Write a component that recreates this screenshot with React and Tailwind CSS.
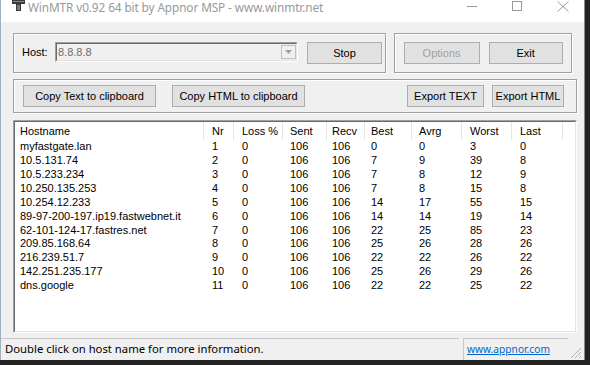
import React from "react";

const rows = [
  ["myfastgate.lan", 1, 0, 106, 106, 0, 0, 3, 0],
  ["10.5.131.74", 2, 0, 106, 106, 7, 9, 39, 8],
  ["10.5.233.234", 3, 0, 106, 106, 7, 8, 12, 9],
  ["10.250.135.253", 4, 0, 106, 106, 7, 8, 15, 8],
  ["10.254.12.233", 5, 0, 106, 106, 14, 17, 55, 15],
  ["89-97-200-197.ip19.fastwebnet.it", 6, 0, 106, 106, 14, 14, 19, 14],
  ["62-101-124-17.fastres.net", 7, 0, 106, 106, 22, 25, 85, 23],
  ["209.85.168.64", 8, 0, 106, 106, 25, 26, 28, 26],
  ["216.239.51.7", 9, 0, 106, 106, 22, 22, 26, 22],
  ["142.251.235.177", 10, 0, 106, 106, 25, 26, 29, 26],
  ["dns.google", 11, 0, 106, 106, 22, 22, 25, 22],
];

const cols = [
  { label: "Hostname", cls: "w-[189px] pl-[5px]" },
  { label: "Nr", cls: "w-[30px] pl-[8px]" },
  { label: "Loss %", cls: "w-[49px] pl-[8px]" },
  { label: "Sent", cls: "w-[44px] pl-[7px]" },
  { label: "Recv", cls: "w-[38px] pl-[5px]" },
  { label: "Best", cls: "w-[47px] pl-[6px]" },
  { label: "Avrg", cls: "w-[50px] pl-[7px]" },
  { label: "Worst", cls: "w-[50px] pl-[8px]" },
  { label: "Last", cls: "w-[51px] pl-[8px]" },
];

function Btn({ children, cls, disabled }) {
  return (
    <div
      className={
        "h-[22px] flex items-center justify-center bg-[#e1e1e1] border border-[#adadad] " +
        (disabled ? "text-[#a0a0a0] " : "text-black ") +
        cls
      }
    >
      {children}
    </div>
  );
}

function AppIcon() {
  return (
    <svg width="16" height="11" viewBox="0 0 16 11">
      <rect x="2" y="0" width="13" height="4" fill="#3a3a3a" />
      <rect x="3" y="1" width="11" height="1" fill="#8a8a8a" />
      <rect x="6" y="4" width="5" height="7" fill="#3a3a3a" />
      <rect x="7" y="5" width="3" height="5" fill="#7a7a7a" />
    </svg>
  );
}

export default function App() {
  return (
    <div
      className="w-[590px] h-[365px] bg-[#232323] overflow-hidden flex text-[11px]"
      style={{ fontFamily: '"Liberation Sans", Arial, sans-serif' }}
    >
      <div className="w-[1px] h-[360px] bg-[#9fb0c0]" />
      <div className="w-[584px] h-[360px] bg-[#f0f0f0] flex flex-col border-r border-[#8a8a8a]">
        {/* Title bar */}
        <div
          className="h-[22px] bg-white flex items-start text-[#999999] shrink-0"
          style={{ fontFamily: '"Noto Sans", "Open Sans", sans-serif' }}
        >
          <div className="pl-[9px] w-[27px]">
            <AppIcon />
          </div>
          <div className="text-[11.8px] leading-[15px] tracking-[-0.1px] whitespace-nowrap">
            WinMTR v0.92 64 bit by Appnor MSP - www.winmtr.net
          </div>
          <div className="flex-1" />
          <div className="w-[10px] h-[1px] bg-[#999] mt-[6px] mr-[35px]" />
          <div className="w-[10px] h-[10px] border border-[#999] mt-[1px] mr-[35px]" />
          <svg width="12" height="11" viewBox="0 0 12 11" className="mt-[1px] mr-[15px]">
            <path d="M0.5 0.5 L11.5 10.5 M11.5 0.5 L0.5 10.5" stroke="#999" strokeWidth="1" />
          </svg>
        </div>

        {/* Body */}
        <div className="flex flex-col px-[12px] pt-[11px] flex-1">
          {/* Row 1 */}
          <div className="flex gap-[8px] h-[40px]">
            <div className="w-[376px] h-[40px] border border-[#a0a0a0] shadow-[inset_1px_1px_0_#fff,1px_1px_0_#fff] flex items-start pt-[8px] pl-[8px]">
              <div className="w-[33px] h-[20px] flex items-center leading-none">Host:</div>
              <div className="w-[243px] h-[20px] border border-t-[#a0a0a0] border-l-[#a0a0a0] border-b-white border-r-white">
                <div className="h-full border border-t-[#696969] border-l-[#696969] border-b-[#e3e3e3] border-r-[#e3e3e3] bg-[#f0f0f0] flex items-center">
                  <div className="flex-1 pl-[1px] text-[#6d6d6d] leading-none">8.8.8.8</div>
                  <div className="w-[15px] h-[14px] bg-[#f0f0f0] border border-[#c0c0c0] flex items-center justify-center">
                    <svg width="7" height="4" viewBox="0 0 7 4">
                      <path d="M0 0 L7 0 L3.5 4 Z" fill="#a0a0a0" />
                    </svg>
                  </div>
                </div>
              </div>
              <div className="w-[9px]" />
              <Btn cls="w-[75px]">Stop</Btn>
            </div>
            <div className="w-[180px] h-[40px] border border-[#a0a0a0] shadow-[inset_1px_1px_0_#fff,1px_1px_0_#fff] flex items-start pt-[8px] pl-[9px] gap-[9px]">
              <Btn cls="w-[76px]" disabled>Options</Btn>
              <Btn cls="w-[74px]">Exit</Btn>
            </div>
          </div>

          {/* Row 2 */}
          <div className="mt-[6px] w-[564px] h-[34px] border border-[#a0a0a0] shadow-[inset_1px_1px_0_#fff,1px_1px_0_#fff] flex items-start pt-[5px] pl-[9px]">
            <Btn cls="w-[133px]">Copy Text to clipboard</Btn>
            <div className="w-[16px]" />
            <Btn cls="w-[133px]">Copy HTML to clipboard</Btn>
            <div className="flex-1" />
            <Btn cls="w-[77px]">Export TEXT</Btn>
            <div className="w-[8px]" />
            <Btn cls="w-[72px]">Export HTML</Btn>
            <div className="w-[12px]" />
          </div>

          {/* Table */}
          <div className="mt-[7px] w-[564px] h-[213px] border border-t-[#a0a0a0] border-l-[#a0a0a0] border-b-white border-r-white">
            <div className="w-full h-full border border-t-[#696969] border-l-[#696969] border-b-[#e3e3e3] border-r-[#e3e3e3] bg-white flex flex-col">
              <div className="h-[18px] flex shrink-0">
                {cols.map((c) => (
                  <div
                    key={c.label}
                    className={"h-[18px] flex items-center border-r border-[#e5e5e5] text-black " + c.cls}
                  >
                    {c.label}
                  </div>
                ))}
                <div className="flex-1" />
              </div>
              {rows.map((r, i) => (
                <div key={i} className="h-[13.87px] flex items-center text-black leading-none">
                  {r.map((v, j) => (
                    <div key={j} className={"whitespace-nowrap " + cols[j].cls}>
                      {v}
                    </div>
                  ))}
                </div>
              ))}
            </div>
          </div>
        </div>

        {/* Status bar */}
        <div
          className="h-[22px] flex items-stretch shrink-0 mt-[5px]"
          style={{ fontFamily: '"Noto Sans", "Open Sans", sans-serif' }}
        >
          <div className="w-[458px] border-t border-[#c8c8c8] flex items-center pl-[4px] text-black text-[11.3px] whitespace-nowrap">
            Double click on host name for more information.
          </div>
          <div className="w-[4px]" />
          <div className="w-[105px] border-t border-l border-[#c8c8c8] flex items-center pl-[3px] text-[10.2px]">
            <span className="text-[#0066cc] underline">www.appnor.com</span>
          </div>
          <div className="flex-1 relative">
            <svg width="14" height="14" viewBox="0 0 14 14" className="absolute right-[2px] bottom-[1px]">
              <path d="M13 3 L3 13 M13 7 L7 13 M13 11 L11 13" stroke="#b0b0b0" strokeWidth="1" />
            </svg>
          </div>
        </div>
      </div>
    </div>
  );
}
